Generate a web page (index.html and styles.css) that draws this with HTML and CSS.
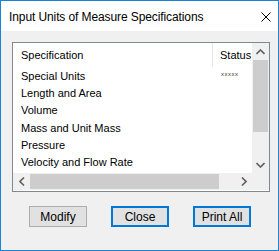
FILE: index.html
```html
<!DOCTYPE html>
<html lang="en">
<head>
    <meta charset="UTF-8">
    <title>Input Units of Measure Specifications</title>
    <link rel="stylesheet" href="styles.css">
</head>
<body>

<div class="dialog">
    <div class="title-bar">
        <span class="title">Input Units of Measure Specifications</span>
        <svg class="close-x" width="10" height="10" viewBox="0 0 10 10">
            <path d="M0.5 0.5 L9.5 9.5 M9.5 0.5 L0.5 9.5" stroke="#000" stroke-width="1"/>
        </svg>
    </div>

    <div class="dialog-body">
        <div class="listbox">
            <div class="list-main">
                <div class="list-view">
                    <div class="list-header">
                        <div class="col-spec">Specification</div>
                        <div class="col-status">Status</div>
                    </div>
                    <div class="list-row"><div class="col-spec">Special Units</div><div class="col-status stars">xxxxx</div></div>
                    <div class="list-row"><div class="col-spec">Length and Area</div><div class="col-status"></div></div>
                    <div class="list-row"><div class="col-spec">Volume</div><div class="col-status"></div></div>
                    <div class="list-row"><div class="col-spec">Mass and Unit Mass</div><div class="col-status"></div></div>
                    <div class="list-row"><div class="col-spec">Pressure</div><div class="col-status"></div></div>
                    <div class="list-row"><div class="col-spec">Velocity and Flow Rate</div><div class="col-status"></div></div>
                </div>
                <div class="vscroll">
                    <div class="arrow-box">
                        <svg width="9" height="6" viewBox="0 0 9 6"><path d="M0.5 5 L4.5 1 L8.5 5" fill="none" stroke="#606060" stroke-width="1.6"/></svg>
                    </div>
                    <div class="vthumb"></div>
                    <div class="vtrack"></div>
                    <div class="arrow-box">
                        <svg width="9" height="6" viewBox="0 0 9 6"><path d="M0.5 1 L4.5 5 L8.5 1" fill="none" stroke="#606060" stroke-width="1.6"/></svg>
                    </div>
                </div>
            </div>
            <div class="hscroll">
                <div class="arrow-box">
                    <svg width="6" height="9" viewBox="0 0 6 9"><path d="M5 0.5 L1 4.5 L5 8.5" fill="none" stroke="#606060" stroke-width="1.6"/></svg>
                </div>
                <div class="hthumb"></div>
                <div class="htrack"></div>
                <div class="arrow-box">
                    <svg width="6" height="9" viewBox="0 0 6 9"><path d="M1 0.5 L5 4.5 L1 8.5" fill="none" stroke="#606060" stroke-width="1.6"/></svg>
                </div>
                <div class="corner"></div>
            </div>
        </div>

        <div class="button-row">
            <button class="btn">Modify</button>
            <button class="btn btn-default">Close</button>
            <button class="btn btn-default">Print All</button>
        </div>
    </div>
</div>

</body>
</html>
```

FILE: styles.css
```css
body {
    margin: 0;
    background: #f0f0f0;
    font-family: 'Liberation Sans', Arial, sans-serif;
}

.dialog {
    width: 279px;
    height: 251px;
    box-sizing: border-box;
    border: 1px solid #1883d7;
    background: #f0f0f0;
    display: flex;
    flex-direction: column;
}

.title-bar {
    height: 30px;
    background: #ffffff;
    display: flex;
    align-items: center;
    justify-content: space-between;
    padding: 0 7px 0 8px;
}

.title {
    font-size: 12px;
    letter-spacing: -0.1px;
    color: #000000;
    margin-top: 1px;
}

.close-x {
    margin-top: 1px;
}

.dialog-body {
    padding: 11px 0 0 11px;
}

.listbox {
    width: 258px;
    height: 150px;
    box-sizing: border-box;
    border: 1px solid #828790;
    background: #ffffff;
    display: flex;
    flex-direction: column;
}

.list-main {
    display: flex;
    height: 130px;
}

.list-view {
    width: 239px;
    font-size: 11px;
    color: #000000;
}

.list-header {
    display: flex;
    height: 24px;
    align-items: center;
}

.list-header .col-spec {
    border-right: 1px solid #e5e5e5;
    height: 24px;
    line-height: 24px;
}

.list-row {
    display: flex;
    height: 17.3px;
    align-items: center;
}

.list-row:first-of-type {
    margin-top: 1px;
}

.col-spec {
    width: 200px;
    box-sizing: border-box;
    padding-left: 8px;
    flex-shrink: 0;
}

.col-status {
    padding-left: 7px;
}

.stars {
    font-size: 6px;
    letter-spacing: 0.5px;
    color: #333333;
    padding-left: 8px;
    margin-top: -4px;
}

.vscroll {
    width: 17px;
    display: flex;
    flex-direction: column;
    background: #f0f0f0;
}

.arrow-box {
    width: 17px;
    height: 17px;
    display: flex;
    align-items: center;
    justify-content: center;
    flex-shrink: 0;
}

.vthumb {
    height: 72px;
    margin: 0 1px;
    background: #cdcdcd;
}

.vtrack {
    flex: 1;
}

.hscroll {
    display: flex;
    height: 17px;
    background: #f0f0f0;
}

.hthumb {
    width: 189px;
    margin: 1px 0;
    background: #cdcdcd;
}

.htrack {
    flex: 1;
}

.corner {
    width: 17px;
    background: #f0f0f0;
}

.button-row {
    display: flex;
    gap: 24px;
    padding: 14px 0 0 17px;
}

.btn {
    width: 58px;
    height: 21px;
    box-sizing: border-box;
    border: 1px solid #adadad;
    background: #e1e1e1;
    font-family: 'Liberation Sans', Arial, sans-serif;
    font-size: 12px;
    color: #000000;
    padding: 0;
}

.btn-default {
    border: 2px solid #0078d7;
}
```
